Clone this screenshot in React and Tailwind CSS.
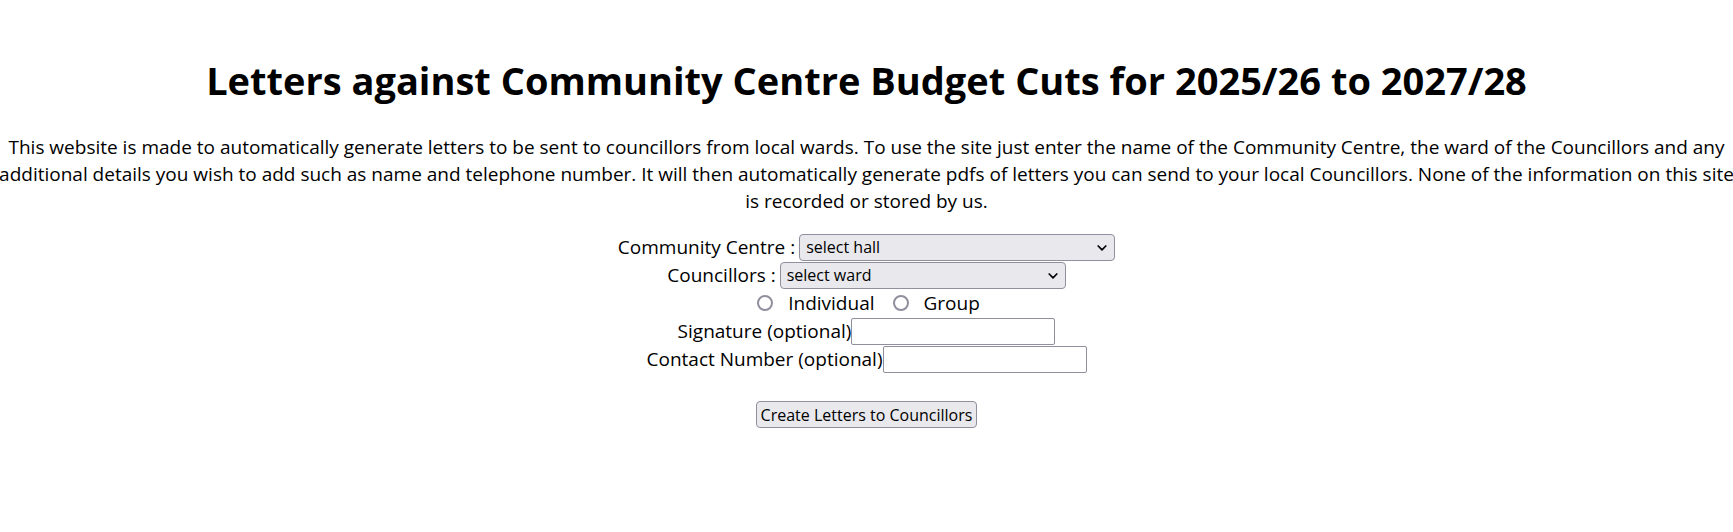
function SelectField({ id, label, placeholder, width }) {
  return (
    <div className="flex h-7 items-center justify-center gap-1">
      <label htmlFor={id}>{label} :</label>
      <span className={`relative block ${width}`}>
        <select
          id={id}
          className="block h-[27px] w-full appearance-none rounded-[4px] border border-[#8f8f9d] bg-[#e9e9ed] px-1.5 text-[16px] leading-6 text-black"
        >
          <option>{placeholder}</option>
        </select>
        <svg
          viewBox="0 0 10 6"
          className="pointer-events-none absolute top-[11px] right-2 h-1.5 w-2.5"
          fill="none"
          stroke="black"
          strokeWidth="1.7"
          strokeLinecap="round"
          strokeLinejoin="round"
          aria-hidden="true"
        >
          <path d="M1.2 1 5 4.8 8.8 1" />
        </svg>
      </span>
    </div>
  );
}

function TextField({ id, label, type }) {
  return (
    <div className="flex h-7 items-center justify-center">
      <label htmlFor={id}>{label}</label>
      <input
        id={id}
        type={type}
        className="h-[27px] w-[204px] rounded-[2px] border border-[#8f8f9d] bg-white px-1 text-[16px]"
      />
    </div>
  );
}

function RadioField({ id, label }) {
  return (
    <div className="flex items-center gap-[15px]">
      <input
        id={id}
        type="radio"
        name="sender"
        className="size-4 appearance-none rounded-full border-2 border-[#8f8f9d] bg-white checked:border-[5px] checked:border-[#0060df]"
      />
      <label htmlFor={id}>{label}</label>
    </div>
  );
}

export default function App() {
  return (
    <main className="overflow-x-clip bg-white pt-[55px] pb-20 text-center font-['Open_Sans',sans-serif] text-[19px] leading-[27px] text-black">
      <h1 className="text-[38px] leading-[50px] font-bold">
        Letters against Community Centre Budget Cuts for 2025/26 to 2027/28
      </h1>
      <p className="-mx-1 mt-[29px]">
        This website is made to automatically generate letters to be sent to councillors from local wards. To use the site just enter the name of the Community Centre, the ward of the Councillors and any additional details you wish to add such as name and telephone number. It will then automatically generate pdfs of letters you can send to your local Councillors. None of the information on this site is recorded or stored by us.
      </p>
      <form className="mt-[18px]">
        <SelectField id="hall" label="Community Centre" placeholder="select hall" width="w-[316px]" />
        <SelectField id="ward" label="Councillors" placeholder="select ward" width="w-[286px]" />
        <div className="flex h-7 items-center justify-center gap-[18px] pl-1">
          <RadioField id="individual" label="Individual" />
          <RadioField id="group" label="Group" />
        </div>
        <TextField id="signature" label="Signature (optional)" type="text" />
        <TextField id="contact" label="Contact Number (optional)" type="tel" />
        <button
          type="button"
          className="mt-7 h-[27px] rounded-[4px] border border-[#8f8f9d] bg-[#e9e9ed] px-1 text-[16px] leading-6"
        >
          Create Letters to Councillors
        </button>
      </form>
    </main>
  );
}
